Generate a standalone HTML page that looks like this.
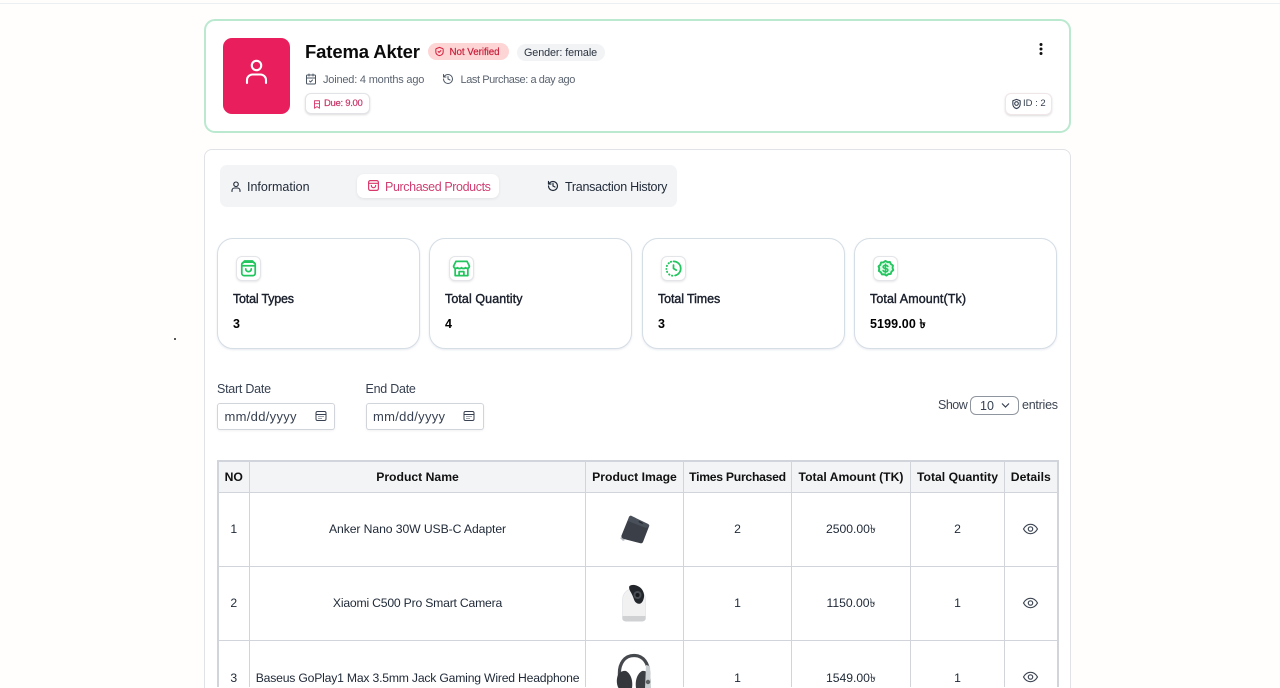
<!DOCTYPE html>
<html lang="en"><head><meta charset="utf-8"><title>Fatema Akter</title>
<style>
*{box-sizing:border-box}
html,body{margin:0;padding:0;width:1280px;height:688px;overflow:hidden}
body{background:#fffefd;font-family:"Liberation Sans","Noto Sans CJK SC",sans-serif;color:#111827}
#wrap{position:absolute;left:0;top:0;width:1280px;height:688px;overflow:hidden}
.a{position:absolute;white-space:nowrap}
.topline{left:0;top:3px;width:1280px;height:1px;background:#eceef0}
.card1{left:204px;top:19px;width:867px;height:114px;background:#fff;border:2px solid #bbe9d0;border-radius:11px}
.card2{left:204px;top:149px;width:867px;height:539px;background:#fff;border:1.5px solid #e1e2e6;border-bottom:none;border-radius:8px 8px 0 0}
.avatar{left:223px;top:38px;width:67px;height:76px;background:#e91e5c;border-radius:9px}
.muted{color:#5b6470;font-size:11px}
.btn{background:#fff;border:1px solid #e2e3e6;border-radius:6px;box-shadow:0 1px 2px rgba(0,0,0,.14)}
.tabs{left:220px;top:165px;width:457px;height:42px;background:#f3f4f6;border-radius:7px}
.tabact{left:357px;top:174px;width:142px;height:24px;background:#fff;border-radius:7px;box-shadow:0 1px 3px rgba(0,0,0,.08)}
.tab{font-size:12.5px;color:#1f2937;line-height:16px}
.stat{top:238px;width:203px;height:111px;background:#fff;border:1px solid #d5dde5;border-radius:16px;box-shadow:0 1px 2px rgba(120,140,170,.18)}
.ibox{top:256px;width:25px;height:25px;background:#fff;border:1px solid #e3e5e8;border-radius:6px;box-shadow:0 1px 2px rgba(0,0,0,.1)}
.ibox svg{position:absolute;left:2px;top:2px}
.sl{top:291px;font-size:12.5px;line-height:16px;color:#1a202c;letter-spacing:-.2px;-webkit-text-stroke:.4px #1a202c}
.sv{top:316.5px;font-size:12.5px;font-weight:700;line-height:15px;color:#000}
.lbl{top:381.5px;font-size:12.5px;line-height:15px;color:#374151;letter-spacing:-.25px}
.date{top:403px;width:118px;height:26.5px;background:#fff;border:1px solid #d1d5db;border-radius:3px;box-shadow:0 1px 2px rgba(0,0,0,.06)}
.datet{top:409px;font-size:13px;line-height:16px;color:#374151;letter-spacing:.3px}
table{position:absolute;left:216.5px;top:460px;border-collapse:collapse;table-layout:fixed;width:840px;font-size:12.2px;color:#1f2937;border:2px solid #d1d5db;border-bottom:none}
th,td{border:1px solid #d1d5db;text-align:center;padding:0;white-space:nowrap;overflow:visible}
th{background:#f3f4f6;height:31px;font-weight:700;color:#111;font-size:12.2px}
td{height:74px}
tr.last td{height:47px;border-bottom:none;vertical-align:top;padding-top:30px;line-height:14px}
.m{position:relative;top:2px;letter-spacing:-.03px}
tr.last .m{top:0}
</style></head><body><div id="wrap">
<div class="a topline"></div>
<div class="a" style="left:173.5px;top:338px;width:2px;height:2px;border-radius:50%;background:#222"></div>

<div class="a card1"></div>
<div class="a avatar"></div>
<svg class="a" style="left:243px;top:56px" width="27" height="31" viewBox="0 0 27 31" fill="none" stroke="#fff" stroke-width="2.1" stroke-linecap="round"><circle cx="13.5" cy="9.500" r="4.700"/><path d="M4 27v-3c0-3 2.500-5.500 5.500-5.500h8c3 0 5.500 2.500 5.500 5.500v3"/></svg>

<div class="a" style="left:305px;top:41px;font-size:18.5px;font-weight:700;line-height:22px;color:#0b0b0b;letter-spacing:-.14px">Fatema Akter</div>
<div class="a" style="left:428px;top:43px;width:81px;height:17px;border-radius:9px;background:#fdd5d5"></div>
<svg class="a" style="left:434px;top:46px" width="11" height="11" viewBox="0 0 24 24" fill="none" stroke="#d61f3c" stroke-width="2.2" stroke-linecap="round" stroke-linejoin="round"><path d="M12 3l6.500 2.500a2 2 0 0 1 1.500 2V13c0 4-3.500 7-8 8-4.500-1-8-4-8-8V7.500a2 2 0 0 1 1.500-2z"/><path d="M9 12l2 2 4-4"/></svg>
<div class="a" style="left:449.500px;top:45.500px;font-size:9.800px;line-height:13px;color:#c81e3a;letter-spacing:-.05px;-webkit-text-stroke:.2px #c81e3a">Not Verified</div>
<div class="a" style="left:517px;top:44px;width:88px;height:17px;border-radius:9px;background:#f1f3f5"></div>
<div class="a" style="left:524px;top:46.500px;font-size:10.800px;line-height:13px;color:#2b3340;letter-spacing:-.1px">Gender: female</div>

<svg class="a" style="left:305px;top:73px" width="12" height="12" viewBox="0 0 24 24" fill="none" stroke="#4b5563" stroke-width="2" stroke-linecap="round" stroke-linejoin="round"><path d="M8 2v4M16 2v4"/><rect x="3" y="4" width="18" height="18" rx="2"/><path d="M3 10h18M9 16l2 2 4-4"/></svg>
<div class="a muted" style="left:323px;top:72.500px;line-height:14px;letter-spacing:-.2px">Joined: 4 months ago</div>
<svg class="a" style="left:442px;top:73px" width="12" height="12" viewBox="0 0 24 24" fill="none" stroke="#4b5563" stroke-width="2" stroke-linecap="round" stroke-linejoin="round"><path d="M3 12a9 9 0 1 0 9-9 9.750 9.750 0 0 0-6.740 2.740L3 8"/><path d="M3 3v5h5M12 7v5l4 2"/></svg>
<div class="a muted" style="left:460.500px;top:72.500px;line-height:14px;letter-spacing:-.43px">Last Purchase: a day ago</div>

<div class="a btn" style="left:305px;top:93px;width:65px;height:21px"></div>
<svg class="a" style="left:312px;top:98.500px" width="10" height="11" viewBox="0 0 24 24" fill="none" stroke="#d9386b" stroke-width="2.200" stroke-linecap="round" stroke-linejoin="round"><path d="M6 3h12v18l-6-4-6 4z"/><path d="M6 10h12"/></svg>
<div class="a" style="left:324px;top:97px;font-size:9.500px;line-height:13px;color:#c9376a;letter-spacing:-.3px;-webkit-text-stroke:.2px #c9376a">Due: 9.00</div>

<svg class="a" style="left:1036px;top:42px" width="10" height="14" viewBox="0 0 10 14" fill="#111"><circle cx="5" cy="2.500" r="1.500"/><circle cx="5" cy="7" r="1.500"/><circle cx="5" cy="11.500" r="1.500"/></svg>
<div class="a btn" style="left:1005px;top:93px;width:47px;height:22px;border-color:#efe6e8"></div>
<svg class="a" style="left:1011px;top:98px" width="11" height="12" viewBox="0 0 24 24" fill="none" stroke="#374151" stroke-width="2.400" stroke-linecap="round" stroke-linejoin="round"><path d="M12 2l8 3v7c0 5-3.500 8.500-8 10-4.500-1.500-8-5-8-10V5z"/><circle cx="12" cy="11" r="4"/></svg>
<div class="a" style="left:1023px;top:97px;font-size:9.500px;line-height:13px;color:#374151">ID : 2</div>

<div class="a card2"></div>
<div class="a tabs"></div>
<div class="a tabact"></div>
<svg class="a" style="left:229.500px;top:179.500px" width="12" height="13" viewBox="0 0 24 24" fill="none" stroke="#1f2937" stroke-width="2.200" stroke-linecap="round" stroke-linejoin="round"><circle cx="12" cy="7.500" r="4.500"/><path d="M4 22v-2a5 5 0 0 1 5-5h6a5 5 0 0 1 5 5v2"/></svg>
<div class="a tab" style="left:247px;top:178.500px">Information</div>
<svg class="a" style="left:366.500px;top:179px" width="13" height="13" viewBox="0 0 24 24" fill="none" stroke="#d9386b" stroke-width="2.200" stroke-linecap="round" stroke-linejoin="round"><rect x="3" y="3" width="18" height="18" rx="3"/><path d="M3 8h18M8 12a4 4 0 0 0 8 0"/></svg>
<div class="a tab" style="left:385px;top:178.500px;color:#cf3f72;letter-spacing:-.39px">Purchased Products</div>
<svg class="a" style="left:547px;top:179.500px" width="12" height="12" viewBox="0 0 24 24" fill="none" stroke="#1f2937" stroke-width="2.400" stroke-linecap="round" stroke-linejoin="round"><path d="M3 12a9 9 0 1 0 9-9 9.750 9.750 0 0 0-6.740 2.740L3 8"/><path d="M3 3v5h5M12 7v5l4 2"/></svg>
<div class="a tab" style="left:565px;top:178.500px;letter-spacing:-.27px">Transaction History</div>

<div class="a stat" style="left:217px"></div>
<div class="a stat" style="left:429px"></div>
<div class="a stat" style="left:642px"></div>
<div class="a stat" style="left:854px"></div>

<div class="a ibox" style="left:236px"><svg width="19" height="19" viewBox="0 0 24 24" fill="none" stroke="#22c55e" stroke-width="2.200" stroke-linecap="round" stroke-linejoin="round"><rect x="3.500" y="4" width="17" height="17" rx="3"/><path d="M3.800 8.500h16.400M5 5l2-2.500h10L19 5M8.500 12.500a3.500 3.500 0 0 0 7 0"/></svg></div>
<div class="a ibox" style="left:449px"><svg width="19" height="19" viewBox="0 0 24 24" fill="none" stroke="#22c55e" stroke-width="2.200" stroke-linecap="round" stroke-linejoin="round"><path d="M5 3h14l3 6a3 3 0 0 1-5 2 3.500 3.500 0 0 1-5 0 3.500 3.500 0 0 1-5 0 3 3 0 0 1-5-2z"/><path d="M4 12v9h16v-9M9 21v-5h6v5"/></svg></div>
<div class="a ibox" style="left:661px"><svg width="19" height="19" viewBox="0 0 24 24" fill="none" stroke="#22c55e" stroke-width="2.200" stroke-linecap="round" stroke-linejoin="round"><path d="M12 3a9 9 0 0 1 2 17.800"/><path d="M12 7.500V12l3.500 2"/><path d="M3 12.500v.1M3.800 8.500l-.2.400M6.200 5.200l-.4.300M9 3.500l-.4.100M3.800 16l.2.400M6.500 19.500l.4.300M10 21l.5.100" stroke-width="2.400"/></svg></div>
<div class="a ibox" style="left:873px"><svg width="19" height="19" viewBox="0 0 24 24" fill="#fff" stroke="#22c55e" stroke-width="2.400" stroke-linecap="round" stroke-linejoin="round"><path d="M12 2.500l2.600 1.500 3-.2 1.300 2.700 2.500 1.700-.5 3 .9 2.800-2.300 2-.9 2.900-3 .2-2.500 1.800-2.600-1.500-3 .1-1.400-2.700-2.500-1.700.5-3-.9-2.800 2.300-2 .9-2.900 3-.2z" fill="#dcfce7"/><path d="M15 9.500c-.5-1-1.500-1.500-3-1.500-1.800 0-3 .8-3 2s1 1.700 3 2 3 .8 3 2-1.200 2-3 2c-1.500 0-2.500-.5-3-1.500M12 6.500v11" fill="none" stroke-width="1.900"/></svg></div>

<div class="a sl" style="left:233px">Total Types</div><div class="a sv" style="left:233px">3</div>
<div class="a sl" style="left:445px;letter-spacing:.08px">Total Quantity</div><div class="a sv" style="left:445px">4</div>
<div class="a sl" style="left:658px;letter-spacing:-.1px">Total Times</div><div class="a sv" style="left:658px">3</div>
<div class="a sl" style="left:870px;letter-spacing:.1px">Total Amount(Tk)</div><div class="a sv" style="left:870px;letter-spacing:.1px">5199.00 ৳</div>

<div class="a lbl" style="left:217px">Start Date</div>
<div class="a lbl" style="left:365.500px">End Date</div>
<div class="a date" style="left:217px"></div>
<div class="a date" style="left:365.500px"></div>
<div class="a datet" style="left:224.500px">mm/dd/yyyy</div>
<div class="a datet" style="left:373px">mm/dd/yyyy</div>
<svg class="a" style="left:315px;top:410px" width="12" height="12" viewBox="0 0 24 24" fill="none" stroke="#374151" stroke-width="2"><rect x="2" y="3" width="20" height="18" rx="3"/><path d="M2 9h20"/><path d="M7 13h2M11 13h2M15 13h2M7 17h2M11 17h2" stroke-width="1.800"/></svg>
<svg class="a" style="left:463px;top:410px" width="12" height="12" viewBox="0 0 24 24" fill="none" stroke="#374151" stroke-width="2"><rect x="2" y="3" width="20" height="18" rx="3"/><path d="M2 9h20"/><path d="M7 13h2M11 13h2M15 13h2M7 17h2M11 17h2" stroke-width="1.800"/></svg>

<div class="a lbl" style="left:938px;top:397.500px;color:#3d4552;letter-spacing:-.5px">Show</div>
<div class="a" style="left:970px;top:396px;width:49px;height:19px;background:#fff;border:1px solid #8f959e;border-radius:6px"></div>
<div class="a" style="left:980px;top:398.500px;font-size:12.500px;line-height:15px;color:#374151">10</div>
<svg class="a" style="left:1001px;top:402px" width="9" height="7" viewBox="0 0 9 7" fill="none" stroke="#374151" stroke-width="1.200"><path d="M1 1.500l3.500 3.500L8 1.500"/></svg>
<div class="a lbl" style="left:1022px;top:397.500px;color:#3d4552">entries</div>

<table>
<colgroup><col style="width:32px"><col style="width:336px"><col style="width:98px"><col style="width:108px"><col style="width:119px"><col style="width:94px"><col style="width:53px"></colgroup>
<tr><th>NO</th><th>Product Name</th><th>Product Image</th><th style="letter-spacing:-.27px">Times Purchased</th><th>Total Amount (TK)</th><th>Total Quantity</th><th>Details</th></tr>
<tr><td>1</td><td style="letter-spacing:-.09px">Anker Nano 30W USB-C Adapter</td><td></td><td>2</td><td><span class="m">2500.00৳</span></td><td>2</td><td></td></tr>
<tr><td>2</td><td style="letter-spacing:-.2px">Xiaomi C500 Pro Smart Camera</td><td></td><td>1</td><td><span class="m">1150.00৳</span></td><td>1</td><td></td></tr>
<tr class="last"><td>3</td><td style="letter-spacing:-.2px">Baseus GoPlay1 Max 3.5mm Jack Gaming Wired Headphone</td><td></td><td>1</td><td><span class="m">1549.00৳</span></td><td>1</td><td></td></tr>
</table>

<svg class="a" style="left:615px;top:511px" width="38" height="38" viewBox="0 0 38 38"><path d="M5 27l3 3 2-1-3-3z" fill="#b8bcc2"/><path d="M14 6c.5-1 1.500-1.500 2.500-1L33 13c1 .5 1.500 1.500 1 2.500L28 31c-.5 1-1.500 1.500-2.500 1.300L9 28c-2-.5-3-2-2.500-3.500z" fill="#3a3f48"/><path d="M14 6c.5-1 1.500-1.500 2.500-1L33 13c1 .5 1.500 1.500 1 2.500L31 17 13 10z" fill="#4a505a"/><path d="M24 10l4 2-.5 1-4-2z" fill="#23262c"/></svg>

<svg class="a" style="left:618px;top:583px" width="32" height="41" viewBox="0 0 32 41"><path d="M4.500 17c0-6 4-11 10-11h3c6 0 10 5 10 11v19h-23z" fill="#f1f1f2" stroke="#e2e3e5" stroke-width=".7"/><path d="M4.500 33h23v3c0 1.500-2 2.500-4 2.500h-15c-2 0-4-1-4-2.500z" fill="#cfd1d3"/><path d="M11.500 3c3-2 7-1 10 1 3 2 5 6 4.500 10-.5 3-1.500 5.500-3.500 6.500-3 1-5.500-1-6.500-4-1-3-2-5-3-7-1.500-2-2.500-5-1.500-6.500z" fill="#23262b"/><circle cx="19.500" cy="12" r="4" fill="#4a4f55"/><circle cx="19.500" cy="12" r="2" fill="#16181b"/></svg>

<svg class="a" style="left:615px;top:652px" width="38" height="36" viewBox="0 0 38 36"><path d="M4.500 24C3.500 11 10 3.500 19 3.500S34.500 11 33.500 24" fill="none" stroke="#45484d" stroke-width="3.200"/><path d="M3.500 22c-2 3-2.500 10 0 14H17c1-6-.5-14-6-17-3-.5-6 1-7.500 3z" fill="#34373c"/><path d="M34 22c2 3 2.500 10 0 14H21c-1-6 .5-14 6-17 3-.5 5.500 1 7 3z" fill="#3a3d42"/><path d="M31 13l4 1 1 22h-6z" fill="#c9ced0"/><circle cx="33" cy="30" r="2.200" fill="#5c6063"/></svg>

<svg class="a" style="left:1022px;top:521px" width="17" height="16" viewBox="0 0 24 24" fill="none" stroke="#3f4754" stroke-width="1.800"><path d="M1.500 12C4 7.500 7.500 5 12 5s8 2.500 10.500 7C20 16.500 16.500 19 12 19S4 16.500 1.500 12z"/><circle cx="12" cy="12" r="3.300"/></svg>
<svg class="a" style="left:1022px;top:595px" width="17" height="16" viewBox="0 0 24 24" fill="none" stroke="#3f4754" stroke-width="1.800"><path d="M1.500 12C4 7.500 7.500 5 12 5s8 2.500 10.500 7C20 16.500 16.500 19 12 19S4 16.500 1.500 12z"/><circle cx="12" cy="12" r="3.300"/></svg>
<svg class="a" style="left:1022px;top:669px" width="17" height="16" viewBox="0 0 24 24" fill="none" stroke="#3f4754" stroke-width="1.800"><path d="M1.500 12C4 7.500 7.500 5 12 5s8 2.500 10.500 7C20 16.500 16.500 19 12 19S4 16.500 1.500 12z"/><circle cx="12" cy="12" r="3.300"/></svg>
</div></body></html>
